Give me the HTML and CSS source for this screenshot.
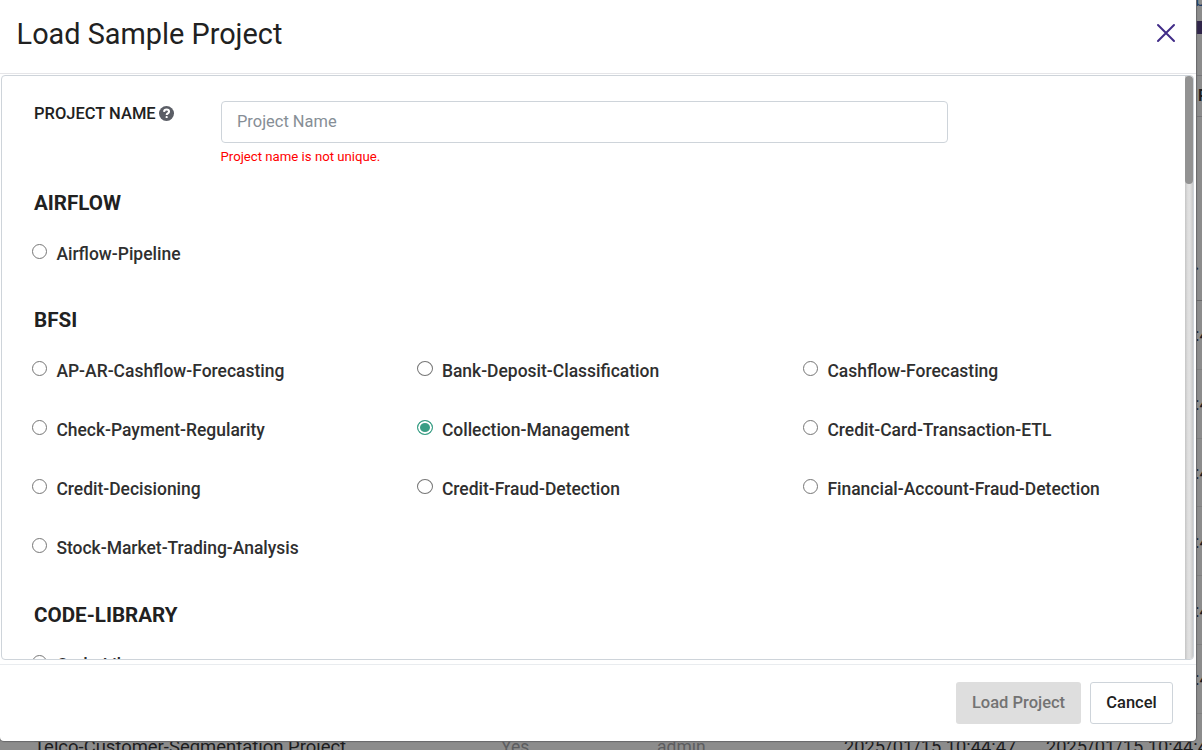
FILE: index.html
```html
<!DOCTYPE html>
<html lang="en">
<head>
<meta charset="utf-8">
<title>Load Sample Project</title>
<link rel="stylesheet" href="styles.css">
</head>
<body>
<div class="page" aria-hidden="true">
  <div class="page-top"><span class="page-link">b</span></div>
  <div class="page-bar"></div>
  <div class="page-gap"></div>
  <div class="page-head"><span>R</span></div>
  <div class="page-filter"><span>.</span></div>
  <div class="row"><span class="edge">:47</span></div>
  <div class="row"><span class="edge">:47</span></div>
  <div class="row"><span class="edge">:47</span></div>
  <div class="row"><span class="edge">:47</span></div>
  <div class="row"><span class="edge">:47</span></div>
  <div class="row"><span class="edge">:47</span></div>
  <div class="row"><span>Telco-Customer-Segmentation Project</span><span class="dim">Yes</span><span class="dim">admin</span><span class="date">2025/01/15 10:44:47</span><span class="date">2025/01/15 10:44:47</span></div>
</div>

<div class="modal" role="dialog">
  <header class="modal-header">
    <h1>Load Sample Project</h1>
    <svg class="close" viewBox="0 0 20 20" width="20" height="20"><path d="M2 2L18 18M18 2L2 18"/></svg>
  </header>
  <main class="modal-body">
    <div class="content">
      <div class="name-row">
        <div class="name-label">PROJECT NAME<svg class="help" viewBox="0 0 16 16" width="15" height="15"><circle cx="8" cy="8" r="8"/><path d="M5.400 6.200C5.500 4.700 6.500 3.800 8 3.800c1.600 0 2.700.9 2.700 2.200 0 1.900-2.500 1.900-2.500 3.500"/><rect x="7" y="10.700" width="2.300" height="2.200" rx="1"/></svg></div>
        <div class="name-field">
          <input class="text" type="text" placeholder="Project Name">
          <div class="error">Project name is not unique.</div>
        </div>
      </div>
      <h2>AIRFLOW</h2>
      <div class="options">
        <label><i></i>Airflow-Pipeline</label>
      </div>
      <h2>BFSI</h2>
      <div class="options">
        <label><i></i>AP-AR-Cashflow-Forecasting</label>
        <label><i></i>Bank-Deposit-Classification</label>
        <label><i></i>Cashflow-Forecasting</label>
        <label><i></i>Check-Payment-Regularity</label>
        <label><i class="on"></i>Collection-Management</label>
        <label><i></i>Credit-Card-Transaction-ETL</label>
        <label><i></i>Credit-Decisioning</label>
        <label><i></i>Credit-Fraud-Detection</label>
        <label><i></i>Financial-Account-Fraud-Detection</label>
        <label><i></i>Stock-Market-Trading-Analysis</label>
      </div>
      <h2 class="last">CODE-LIBRARY</h2>
      <div class="options">
        <label><i></i>Code-Library</label>
      </div>
    </div>
    <div class="scrollbar"><div class="thumb"></div></div>
  </main>
  <footer class="modal-footer">
    <button class="load" disabled>Load Project</button>
    <button class="cancel">Cancel</button>
  </footer>
</div>
</body>
</html>
```
FILE: styles.css
```css
* { box-sizing: border-box; }
body {
  margin: 0;
  width: 1202px;
  height: 750px;
  overflow: hidden;
  position: relative;
  background: #8c8c8c;
  color: #212121;
  font-family: Roboto, "Liberation Sans", sans-serif;
}

/* Dimmed page behind the dialog */
.page { height: 750px; overflow: hidden; white-space: nowrap; font-size: 18.300px; color: #1c1c1e; }
.page-top { display: flex; height: 21px; padding-left: 1195px; }
.page-link { color: #1c3b66; line-height: 20px; margin-top: -10px; }
.page-bar { height: 13px; background: #30254a; }
.page-gap { height: 41px; }
.page-head { height: 42px; border-top: 1px solid #77777a; border-bottom: 1px solid #77777a; padding-left: 1198px; font-weight: 700; font-size: 16px; line-height: 40px; }
.page-filter { height: 184px; border-bottom: 1px solid #68686a; padding: 137px 0 0 1194px; line-height: 20px; font-weight: 700; }
.row {
  height: 68.8px;
  display: grid;
  grid-template-columns: 467px 156px 187px 202px 200px;
  align-items: center;
  padding-left: 34px;
  border-bottom: 1px solid #808080;
}
.row:last-child { padding-bottom: 2px; }
.row:last-child span:first-child { font-size: 18.450px; }
.edge { grid-column: 5; padding-left: 149px; }
.dim { color: #5c5d60; font-size: 17.500px; }

.modal {
  position: absolute;
  left: 0;
  top: 0;
  width: 1196px;
  height: 741px;
  display: flex;
  flex-direction: column;
  background: #fff;
  border-radius: 0 0 4px 4px;
  box-shadow: 0 0 1px 1px #68686a;
}
.modal-header {
  height: 74px;
  padding: 0 20px 7px 16.600px;
  display: flex;
  align-items: center;
  justify-content: space-between;
  border-bottom: 1px solid #e5e5e8;
}
h1 { margin: 0; padding-top: 2px; font-size: 28.850px; font-weight: 400; line-height: 40px; }
.close { fill: none; stroke: #412c88; stroke-width: 2; stroke-linecap: round; }

.modal-body {
  height: 585px;
  margin: 1px 2px 0 1px;
  display: flex;
  border: 1px solid #ced4da;
  border-radius: 4px;
  overflow: hidden;
}
.content { flex: 1; height: 583px; overflow: hidden; padding: 25px 0 0 32px; }
.scrollbar {
  width: 8px;
  background: linear-gradient(90deg, #c5c5c5, #dedede 35%, #e1e1e1 60%, #c8c8c8);
}
.thumb { height: 108px; border-radius: 4px; background: #929292; }

.name-row { display: flex; height: 86px; }
.name-label { width: 187px; padding-top: 1px; font-size: 16.500px; font-weight: 500; line-height: 24px; }
.help { margin-left: 3.500px; vertical-align: -2px; fill: #5b5e66; }
.help path { fill: none; stroke: #fff; stroke-width: 2.200; }
.help rect { fill: #fff; }
.name-field { width: 727px; }
.text {
  display: block;
  width: 100%;
  height: 42px;
  padding: 0 15px 2px;
  border: 1px solid #ced4da;
  border-radius: 4px;
  font: 400 16.450px Roboto, sans-serif;
}
.text::placeholder { color: #868e96; }
.error { margin: 4px 0 0 -.5px; color: #f00; font-size: 13.200px; line-height: 20px; }

h2 { margin: 0; padding-top: 1px; font-size: 20.600px; font-weight: 700; line-height: 30px; height: 37px; }
h2.last { padding-top: 2px; }
.options { display: grid; grid-template-columns: repeat(3, 385.500px); margin-left: -2px; padding-bottom: 21px; }
label { height: 59px; display: flex; align-items: center; font-size: 17.480px; font-weight: 500; color: #2f2f2f; }
i { width: 15px; height: 15px; margin: -5px 9.400px 0 0; border: 1px solid #767676; border-radius: 50%; }
i.on { border: 1px solid #3a9e85; background: #3a9e85; box-shadow: inset 0 0 0 2px #fff; }
label:nth-child(3n + 2) i { width: 16px; margin-left: -.5px; margin-right: 8.900px; }

.modal-footer {
  flex: 1;
  margin-top: 4px;
  padding: 17px 23px 0 0;
  display: flex;
  justify-content: flex-end;
  gap: 9px;
  border-top: 1px solid #e9ecef;
}
button { height: 42px; padding: 0 0 2px; border-radius: 3px; font: 500 16.500px Roboto, sans-serif; }
.load { width: 125px; border: 0; background: #dedede; color: #737373; }
.cancel { width: 83px; border: 1px solid #ced4da; background: #fff; color: #212121; }
```
